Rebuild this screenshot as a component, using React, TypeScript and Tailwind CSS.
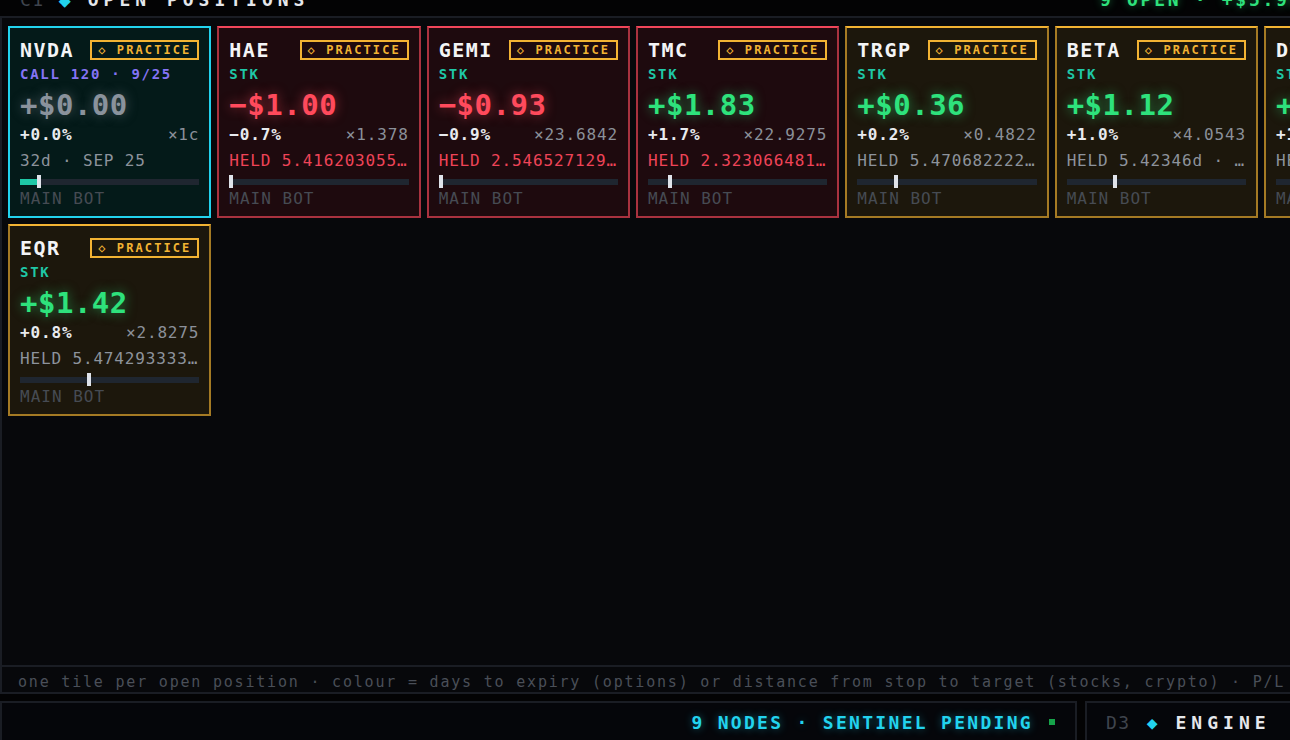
import React from "react";

type Variant = "cyan" | "red" | "amber";

interface Pos {
  ticker: string;
  sub: string;
  subPurple?: boolean;
  pl: string;
  plTone: "gray" | "red" | "green";
  pct: string;
  mult: string;
  held: string;
  heldRed?: boolean;
  marker: number;
  fill?: boolean;
  variant: Variant;
}

const positions: Pos[] = [
  { ticker: "NVDA", sub: "CALL 120 · 9/25", subPurple: true, pl: "+$0.00", plTone: "gray", pct: "+0.0%", mult: "×1c", held: "32d · SEP 25", marker: 9.5, fill: true, variant: "cyan" },
  { ticker: "HAE", sub: "STK", pl: "−$1.00", plTone: "red", pct: "−0.7%", mult: "×1.378", held: "HELD 5.416203055555556d · STOP 92.10", heldRed: true, marker: 0, variant: "red" },
  { ticker: "GEMI", sub: "STK", pl: "−$0.93", plTone: "red", pct: "−0.9%", mult: "×23.6842", held: "HELD 2.546527129629630d · STOP 3.80", heldRed: true, marker: 0, variant: "red" },
  { ticker: "TMC", sub: "STK", pl: "+$1.83", plTone: "green", pct: "+1.7%", mult: "×22.9275", held: "HELD 2.323066481481481d · STOP 4.20", heldRed: true, marker: 11.2, variant: "red" },
  { ticker: "TRGP", sub: "STK", pl: "+$0.36", plTone: "green", pct: "+0.2%", mult: "×0.4822", held: "HELD 5.470682222222222d · STOP 180.5", marker: 20.7, variant: "amber" },
  { ticker: "BETA", sub: "STK", pl: "+$1.12", plTone: "green", pct: "+1.0%", mult: "×4.0543", held: "HELD 5.42346d · STOP 22.10", marker: 25.7, variant: "amber" },
  { ticker: "DVN", sub: "STK", pl: "+$1.07", plTone: "green", pct: "+1.3%", mult: "×2.4519", held: "HELD 5.461208333333333d · STOP 31.4", marker: 30, variant: "amber" },
  { ticker: "KMI", sub: "STK", pl: "+$0.73", plTone: "green", pct: "+0.5%", mult: "×5.1120", held: "HELD 5.468020833333333d · STOP 26.1", marker: 18, variant: "amber" },
  { ticker: "EQR", sub: "STK", pl: "+$1.42", plTone: "green", pct: "+0.8%", mult: "×2.8275", held: "HELD 5.474293333333333d · STOP 66.2", marker: 37.4, variant: "amber" },
];

const variantClass: Record<Variant, string> = {
  cyan: "border-2 border-[#22d3ee] bg-[#041a19]",
  red: "border-2 border-[#a9323f] border-t-[#f0465a] bg-[#1e0a0e]",
  amber: "border-2 border-[#a47a24] border-t-[#f2b333] bg-[#1c170c]",
};

const plClass = {
  gray: "text-[#8a929c] [text-shadow:0_0_12px_rgba(138,146,156,0.5)]",
  red: "text-[#ff4a5c] [text-shadow:0_0_12px_rgba(255,74,92,0.55)]",
  green: "text-[#2ee27c] [text-shadow:0_0_12px_rgba(46,226,124,0.55)]",
};

function Card({ p }: { p: Pos }) {
  return (
    <div className={`flex flex-col px-[10px] pt-[10px] pb-[6px] ${variantClass[p.variant]}`}>
      <div className="flex h-[24px] items-center justify-between">
        <span className="text-[20px] font-bold leading-[24px] tracking-[1.5px] text-[#f3f4f6]">{p.ticker}</span>
        <span className="flex h-[20px] w-[109px] items-center justify-center border-2 border-[#f2b333] text-[12px] font-bold leading-[16px] tracking-[2.1px] text-[#f2b333]">
          ◇ PRACTICE
        </span>
      </div>
      <div
        className={`h-[24px] text-[14px] font-bold leading-[24px] tracking-[1.7px] ${
          p.subPurple ? "text-[#8474f5]" : "text-[#1fc7a6]"
        }`}
      >
        {p.sub}
      </div>
      <div className={`h-[38px] text-[29px] font-bold leading-[38px] tracking-[0.5px] ${plClass[p.plTone]}`}>{p.pl}</div>
      <div className="flex h-[22px] items-center justify-between text-[16px] leading-[22px] tracking-[0.85px]">
        <span className="font-bold text-[#e8eaee]">{p.pct}</span>
        <span className="text-[#8b9099]">{p.mult}</span>
      </div>
      <div
        className={`mt-[4px] h-[22px] overflow-hidden text-ellipsis whitespace-nowrap text-[16px] leading-[22px] tracking-[0.85px] ${
          p.heldRed ? "text-[#ef4458]" : "text-[#8d939c]"
        }`}
      >
        {p.held}
      </div>
      <div className="relative mt-[3px] flex h-[13px] items-center">
        <div className="h-[6px] w-full bg-[#1f2630]" />
        {p.fill && <div className="absolute left-0 top-[3.5px] h-[6px] bg-[#1fc7a6]" style={{ width: `${p.marker}%` }} />}
        <div className="absolute top-0 h-[13px] w-[4px] bg-[#dfe3ea]" style={{ left: `${p.marker}%` }} />
      </div>
      <div className="h-[22px] text-[16px] leading-[22px] tracking-[1px] text-[#464b53]">MAIN BOT</div>
    </div>
  );
}

export default function App() {
  return (
    <div className="h-[740px] w-[1290px] overflow-hidden bg-[#030304] [font-family:'DejaVu_Sans_Mono',monospace]">
      <div className="w-[1685px]">
        {/* header (scrolled partly out of view) */}
        <div className="-mt-[17px] flex h-[35px] items-center border-b-2 border-[#1a1d24] bg-[#030304] pl-[20px]">
          <div className="flex w-[1080px] items-center">
            <span className="text-[18px] tracking-[1.5px] text-[#3f444d]">C1</span>
            <span className="ml-[14px] text-[20px] text-[#22d3ee]">◆</span>
            <span className="ml-[17px] text-[18px] font-bold tracking-[5px] text-[#e5e7eb]">OPEN POSITIONS</span>
          </div>
          <span className="whitespace-nowrap text-[18px] font-bold tracking-[2.7px] text-[#2ee27c] [text-shadow:0_0_8px_rgba(46,226,124,0.45)]">
            9 OPEN · +$5.96 UNREALISED
          </span>
        </div>

        {/* main panel */}
        <div className="flex h-[676px] flex-col border-x-2 border-b-2 border-[#1a1d24] bg-[#07080b]">
          <div className="flex-1 px-[6px] pt-[8px]">
            <div className="grid grid-cols-[repeat(8,203.33px)] gap-[6px]">
              {positions.map((p) => (
                <Card key={p.ticker} p={p} />
              ))}
            </div>
          </div>
          <div className="flex h-[27px] items-center border-t-2 border-[#1a1d24] pl-[16px] pt-[4px]">
            <span className="whitespace-nowrap text-[15px] leading-[20px] tracking-[1.8px] text-[#4a4f58]">
              one tile per open position · colour = days to expiry (options) or distance from stop to target (stocks, crypto) · P/L glow = live mark
            </span>
          </div>
        </div>

        {/* bottom bar */}
        <div className="mt-[7px] flex gap-[8px]">
          <div className="flex h-[60px] w-[1077px] items-start justify-end border-x-2 border-t-2 border-[#1a1d24] bg-[#05060a] pr-[20px]">
            <div className="flex h-[38px] items-center gap-[16px]">
              <span className="whitespace-nowrap text-[18px] font-bold tracking-[2.3px] text-[#22d3ee] [text-shadow:0_0_8px_rgba(34,211,238,0.45)]">
                9 NODES · SENTINEL PENDING
              </span>
              <span className="h-[6px] w-[6px] bg-[#16a34a]" />
            </div>
          </div>
          <div className="flex h-[60px] flex-1 items-start border-x-2 border-t-2 border-[#1a1d24] bg-[#05060a] pl-[19px]">
            <div className="flex h-[38px] items-center">
              <span className="text-[18px] tracking-[1.5px] text-[#3f444d]">D3</span>
              <span className="ml-[16px] text-[18px] text-[#22d3ee]">◆</span>
              <span className="ml-[18px] text-[18px] font-bold tracking-[5px] text-[#e5e7eb]">ENGINE</span>
            </div>
          </div>
        </div>
      </div>
    </div>
  );
}
